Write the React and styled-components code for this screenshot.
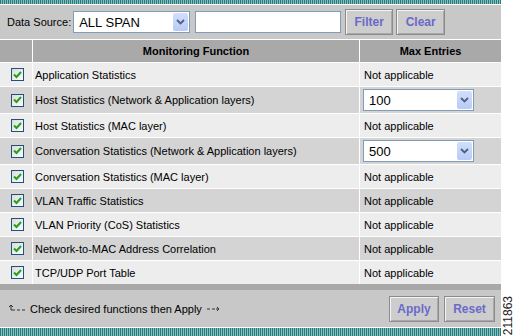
import React from "react";
import styled, { createGlobalStyle } from "styled-components";

const GlobalStyle = createGlobalStyle`
  html, body {
    margin: 0;
    padding: 0;
    background: #fff;
  }
  body {
    font-family: "Liberation Sans", Arial, sans-serif;
    font-size: 11px;
    color: #000;
  }
`;

const Page = styled.div`
  display: flex;
  width: 515px;
  height: 336px;
  overflow: hidden;
`;

const Panel = styled.div`
  width: 501px;
  display: flex;
  flex-direction: column;
  gap: 1px;
  background: #fff;
`;

const Stripe = styled.div`
  height: ${(p) => p.h}px;
  flex-shrink: 0;
  background: repeating-linear-gradient(90deg, #2b7a7a 0 1px, #86c0c0 1px 2px);
`;

const Toolbar = styled.div`
  height: 34px;
  display: flex;
  align-items: center;
  padding-left: 7px;
  background: #c8c8c8;
`;

const Label = styled.span`
  margin-right: 2px;
`;

const SelectBox = styled.div`
  box-sizing: border-box;
  width: ${(p) => p.w}px;
  height: 22px;
  display: flex;
  align-items: center;
  justify-content: space-between;
  padding: 0 1px 0 5px;
  background: #fff;
  border: 1px solid #7f9db9;
  font-size: 13px;
`;

const Arrow = styled.span`
  width: 15px;
  height: 18px;
  display: flex;
  align-items: center;
  justify-content: center;
  background: linear-gradient(#d2defc, #b8cbf6);
  border-radius: 2px;
`;

const TextInput = styled.div`
  box-sizing: border-box;
  width: 146px;
  height: 22px;
  margin-left: 5px;
  background: #fff;
  border: 1px solid #7f9db9;
`;

const Button = styled.button`
  box-sizing: border-box;
  width: ${(p) => p.w}px;
  height: 26px;
  margin-left: ${(p) => p.ml}px;
  padding: 0;
  background: #cdcdcd;
  border: 1px solid #8c8c8c;
  box-shadow: inset 1px 1px #f4f4f4, inset -1px -1px #a8a8a8;
  font-family: "Liberation Sans", Arial, sans-serif;
  font-size: 12px;
  font-weight: bold;
  color: #6a6ac8;
`;

const Grid = styled.div`
  display: grid;
  grid-template-columns: 32px 326px 141px;
  gap: 1px;
  background: #fff;
`;

const Head = styled.div`
  height: 22px;
  display: flex;
  align-items: center;
  justify-content: center;
  background: #a9a9a9;
  font-weight: bold;
  font-size: 11px;
`;

const Cell = styled.div`
  height: ${(p) => (p.tall ? 26 : 23)}px;
  display: flex;
  align-items: center;
  padding-left: ${(p) => p.pl}px;
  background: ${(p) => (p.dark ? "#d4d4d4" : "#ededed")};
`;

const Check = styled.span`
  box-sizing: border-box;
  width: 13px;
  height: 13px;
  display: flex;
  align-items: center;
  justify-content: center;
  border: 1px solid #1c5180;
  background: linear-gradient(135deg, #dcdcd7, #fbfbf9);
`;

const Bar = styled.div`
  height: 6px;
  margin-top: -1px;
  background: #a8a8a8;
`;

const Footer = styled.div`
  height: 37px;
  margin-top: -1px;
  display: flex;
  align-items: center;
  padding-left: 8px;
  background: #c8c8c8;
`;

const Hint = styled.span`
  flex: 1;
  display: flex;
  align-items: center;
  gap: 3px;
  font-size: 11px;
`;

const Side = styled.div`
  flex: 1;
  display: flex;
  align-items: flex-end;
  justify-content: center;
  padding-bottom: 1px;
`;

const Code = styled.span`
  writing-mode: vertical-rl;
  transform: rotate(180deg);
  font-size: 12px;
  color: #222;
`;

const Chevron = () => (
  <svg width="9" height="6" viewBox="0 0 9 6">
    <path d="M1 1 L4.5 4.5 L8 1" fill="none" stroke="#4d6185" strokeWidth="1.8" />
  </svg>
);

const Tick = () => (
  <svg width="9" height="8" viewBox="0 0 9 8">
    <path d="M1 3.5 L3.5 6 L8 1" fill="none" stroke="#21a121" strokeWidth="2" />
  </svg>
);

const rows = [
  ["Application Statistics", null],
  ["Host Statistics (Network & Application layers)", "100"],
  ["Host Statistics (MAC layer)", null],
  ["Conversation Statistics (Network & Application layers)", "500"],
  ["Conversation Statistics (MAC layer)", null],
  ["VLAN Traffic Statistics", null],
  ["VLAN Priority (CoS) Statistics", null],
  ["Network-to-MAC Address Correlation", null],
  ["TCP/UDP Port Table", null],
];

export default function App() {
  return (
    <Page>
      <GlobalStyle />
      <Panel>
        <Stripe h={4} />
        <Toolbar>
          <Label>Data Source:</Label>
          <SelectBox w={117}>
            ALL SPAN
            <Arrow>
              <Chevron />
            </Arrow>
          </SelectBox>
          <TextInput />
          <Button w={48} ml={4}>Filter</Button>
          <Button w={49} ml={3}>Clear</Button>
        </Toolbar>
        <Grid>
          <Head />
          <Head>Monitoring Function</Head>
          <Head>Max Entries</Head>
          {rows.map(([name, max], i) => {
            const dark = i % 2 === 1;
            const tall = !!max;
            return (
              <React.Fragment key={name}>
                <Cell dark={dark} tall={tall} pl={11}>
                  <Check>
                    <Tick />
                  </Check>
                </Cell>
                <Cell dark={dark} tall={tall} pl={2}>
                  {name}
                </Cell>
                <Cell dark={dark} tall={tall} pl={max ? 3 : 4}>
                  {max ? (
                    <SelectBox w={111}>
                      {max}
                      <Arrow>
                        <Chevron />
                      </Arrow>
                    </SelectBox>
                  ) : (
                    "Not applicable"
                  )}
                </Cell>
              </React.Fragment>
            );
          })}
        </Grid>
        <Bar />
        <Footer>
          <Hint>
            <svg width="19" height="9" viewBox="0 0 19 9">
              <path
                d="M3 1 L1 3 M3 1 L5 3 M3 1 L3 6 L7 6 M9 6 L12 6 M14 6 L17 6"
                fill="none"
                stroke="#333"
                strokeWidth="1"
              />
            </svg>
            Check desired functions then Apply
            <svg width="17" height="9" viewBox="0 0 17 9">
              <path
                d="M2 5 L5 5 M7 5 L10 5 M11 5 L14 5 M12 3 L14 5 L12 7"
                fill="none"
                stroke="#333"
                strokeWidth="1"
              />
            </svg>
          </Hint>
          <Button w={50} ml={0}>Apply</Button>
          <Button w={51} ml={5}>Reset</Button>
          <span style={{ width: 6 }} />
        </Footer>
        <Stripe h={8} />
      </Panel>
      <Side>
        <Code>211863</Code>
      </Side>
    </Page>
  );
}
